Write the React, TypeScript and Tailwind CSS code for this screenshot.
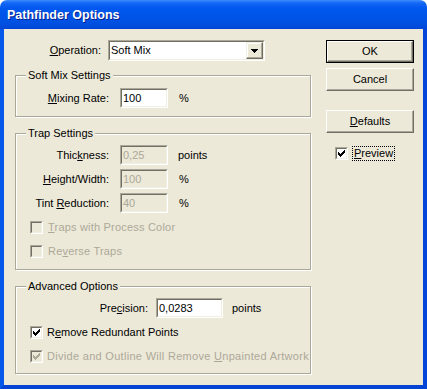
import React from "react";

function CheckMark({ color }: { color: string }) {
  return (
    <svg width="7" height="7" viewBox="0 0 7 7" shapeRendering="crispEdges">
      <g fill={color}>
        <rect x="6" y="0" width="1" height="1" />
        <rect x="5" y="1" width="2" height="1" />
        <rect x="0" y="2" width="1" height="1" />
        <rect x="4" y="2" width="3" height="1" />
        <rect x="0" y="3" width="2" height="1" />
        <rect x="3" y="3" width="3" height="1" />
        <rect x="0" y="4" width="5" height="1" />
        <rect x="1" y="5" width="3" height="1" />
        <rect x="2" y="6" width="1" height="1" />
      </g>
    </svg>
  );
}

function Box({ checked, disabled }: { checked?: boolean; disabled?: boolean }) {
  return (
    <div className="w-[13px] h-[13px] shrink-0 border border-t-[#ACA899] border-l-[#ACA899] border-r-white border-b-white">
      <div
        className={`w-full h-full border border-t-[#716F64] border-l-[#716F64] border-r-[#F1EFE2] border-b-[#F1EFE2] flex items-center justify-center ${
          disabled ? "bg-[#ECE9D8]" : "bg-white"
        }`}
      >
        {checked ? <CheckMark color={disabled ? "#ACA899" : "#000000"} /> : null}
      </div>
    </div>
  );
}

function Edit({ w, value, disabled }: { w: string; value: string; disabled?: boolean }) {
  return (
    <div className={`h-[20px] shrink-0 border border-t-[#ACA899] border-l-[#ACA899] border-r-white border-b-white ${w}`}>
      <div
        className={`h-full border border-t-[#716F64] border-l-[#716F64] border-r-[#F1EFE2] border-b-[#F1EFE2] flex items-center pl-[1px] ${
          disabled ? "bg-[#ECE9D8] text-[#ACA899]" : "bg-white text-black"
        }`}
      >
        {value}
      </div>
    </div>
  );
}

function Btn({ children, def }: { children: React.ReactNode; def?: boolean }) {
  const inner = (
    <div className="w-full h-full border border-t-white border-l-white border-r-[#716F64] border-b-[#716F64] shadow-[inset_-1px_-1px_0_#ACA899] flex items-center justify-center">
      {children}
    </div>
  );
  return (
    <div className={`w-[88px] h-[23px] bg-[#ECE9D8] ${def ? "border border-black" : ""}`}>{inner}</div>
  );
}

function Group({ title, children, className }: { title: string; children: React.ReactNode; className: string }) {
  return (
    <div className={`relative border border-[#ACA899] shadow-[inset_1px_1px_0_#ffffff,1px_1px_0_#ffffff] ${className}`}>
      <span className="absolute left-[10px] -top-[8px] px-[2px] leading-[14px] bg-[#ECE9D8]">{title}</span>
      {children}
    </div>
  );
}

export default function App() {
  return (
    <div className="w-[427px] h-[389px] bg-white flex flex-col font-['Liberation_Sans',Arial,sans-serif] text-[11px] text-black">
      <div className="h-[29px] shrink-0 rounded-t-[7px] bg-[linear-gradient(to_bottom,#3C8CFF_0px,#1468F5_3px,#0058EE_8px,#0055E8_16px,#0050E0_24px,#0046D6_29px)] flex items-center pl-[7px] pt-[1px]">
        <span className="text-white font-bold text-[12.5px] [text-shadow:1px_1px_0_#0A1E8C]">Pathfinder Options</span>
      </div>
      <div className="flex-1 flex border-l-4 border-r-4 border-b-4 border-l-[#0658EA] border-r-[#0345D8] border-b-[#0443D3] bg-[#ECE9D8] pl-[11px] pt-[11px]">
        <div className="w-[296px] flex flex-col">
          <div className="h-[21px] flex items-center">
            <div className="w-[86px] text-right">
              <u>O</u>peration:
            </div>
            <div className="ml-[7px] w-[157px] h-[21px] border border-t-[#ACA899] border-l-[#ACA899] border-r-white border-b-white">
              <div className="w-full h-full border border-t-[#716F64] border-l-[#716F64] border-r-[#F1EFE2] border-b-[#F1EFE2] bg-white flex items-center">
                <span className="flex-1 pl-[1px]">Soft Mix</span>
                <div className="w-[17px] h-[17px] border border-t-[#F1EFE2] border-l-[#F1EFE2] border-r-[#716F64] border-b-[#716F64] shadow-[inset_-1px_-1px_0_#ACA899,inset_1px_1px_0_#ffffff] bg-[#ECE9D8] flex items-center justify-center">
                  <svg width="7" height="4" viewBox="0 0 7 4" shapeRendering="crispEdges">
                    <polygon points="0,0 7,0 3.5,4" fill="#000" />
                  </svg>
                </div>
              </div>
            </div>
          </div>

          <Group title="Soft Mix Settings" className="mt-[14px] pt-[12px] pb-[8px]">
            <div className="flex items-center">
              <div className="w-[93px] text-right">
                <u>M</u>ixing Rate:
              </div>
              <div className="ml-[11px]">
                <Edit w="w-[48px]" value="100" />
              </div>
              <span className="ml-[11px]">%</span>
            </div>
          </Group>

          <Group title="Trap Settings" className="mt-[16px] pt-[11px] pb-[11px]">
            <div className="flex items-center">
              <div className="w-[93px] text-right">
                Thic<u>k</u>ness:
              </div>
              <div className="ml-[11px]">
                <Edit w="w-[48px]" value="0,25" disabled />
              </div>
              <span className="ml-[10px]">points</span>
            </div>
            <div className="flex items-center mt-[4px]">
              <div className="w-[93px] text-right">
                <u>H</u>eight/Width:
              </div>
              <div className="ml-[11px]">
                <Edit w="w-[48px]" value="100" disabled />
              </div>
              <span className="ml-[11px]">%</span>
            </div>
            <div className="flex items-center mt-[4px]">
              <div className="w-[93px] text-right">
                Tint <u>R</u>eduction:
              </div>
              <div className="ml-[11px]">
                <Edit w="w-[48px]" value="40" disabled />
              </div>
              <span className="ml-[11px]">%</span>
            </div>
            <div className="flex items-center mt-[8px] pl-[14px] h-[13px] text-[#ACA899]">
              <Box disabled />
              <span className="ml-[5px] tracking-[0.2px]">
                <u>T</u>raps with Process Color
              </span>
            </div>
            <div className="flex items-center mt-[11px] pl-[14px] h-[13px] text-[#ACA899]">
              <Box disabled />
              <span className="ml-[5px] tracking-[0.2px]">
                Re<u>v</u>erse Traps
              </span>
            </div>
          </Group>

          <Group title="Advanced Options" className="mt-[16px] pt-[11px] pb-[10px]">
            <div className="flex items-center">
              <div className="w-[132px] text-right">
                Pre<u>c</u>ision:
              </div>
              <div className="ml-[8px]">
                <Edit w="w-[67px]" value="0,0283" />
              </div>
              <span className="ml-[9px]">points</span>
            </div>
            <div className="flex items-center mt-[8px] pl-[14px] h-[13px]">
              <Box checked />
              <span className="ml-[4px]">
                R<u>e</u>move Redundant Points
              </span>
            </div>
            <div className="flex items-center mt-[11px] pl-[14px] h-[13px] text-[#ACA899]">
              <Box checked disabled />
              <span className="ml-[4px] whitespace-nowrap tracking-[0.3px]">
                Divide and Outline Will Remove <u>U</u>npainted Artwork
              </span>
            </div>
          </Group>
        </div>

        <div className="ml-[15px] w-[88px] flex flex-col">
          <Btn def>OK</Btn>
          <div className="mt-[5px]">
            <Btn>Cancel</Btn>
          </div>
          <div className="mt-[19px]">
            <Btn>
              <span>
                <u>D</u>efaults
              </span>
            </Btn>
          </div>
          <div className="mt-[13px] ml-[9px] flex items-center">
            <Box checked />
            <span className="ml-[4px] border border-dotted border-black px-[1px] leading-[13px]">
              <u>P</u>review
            </span>
          </div>
        </div>
      </div>
    </div>
  );
}
